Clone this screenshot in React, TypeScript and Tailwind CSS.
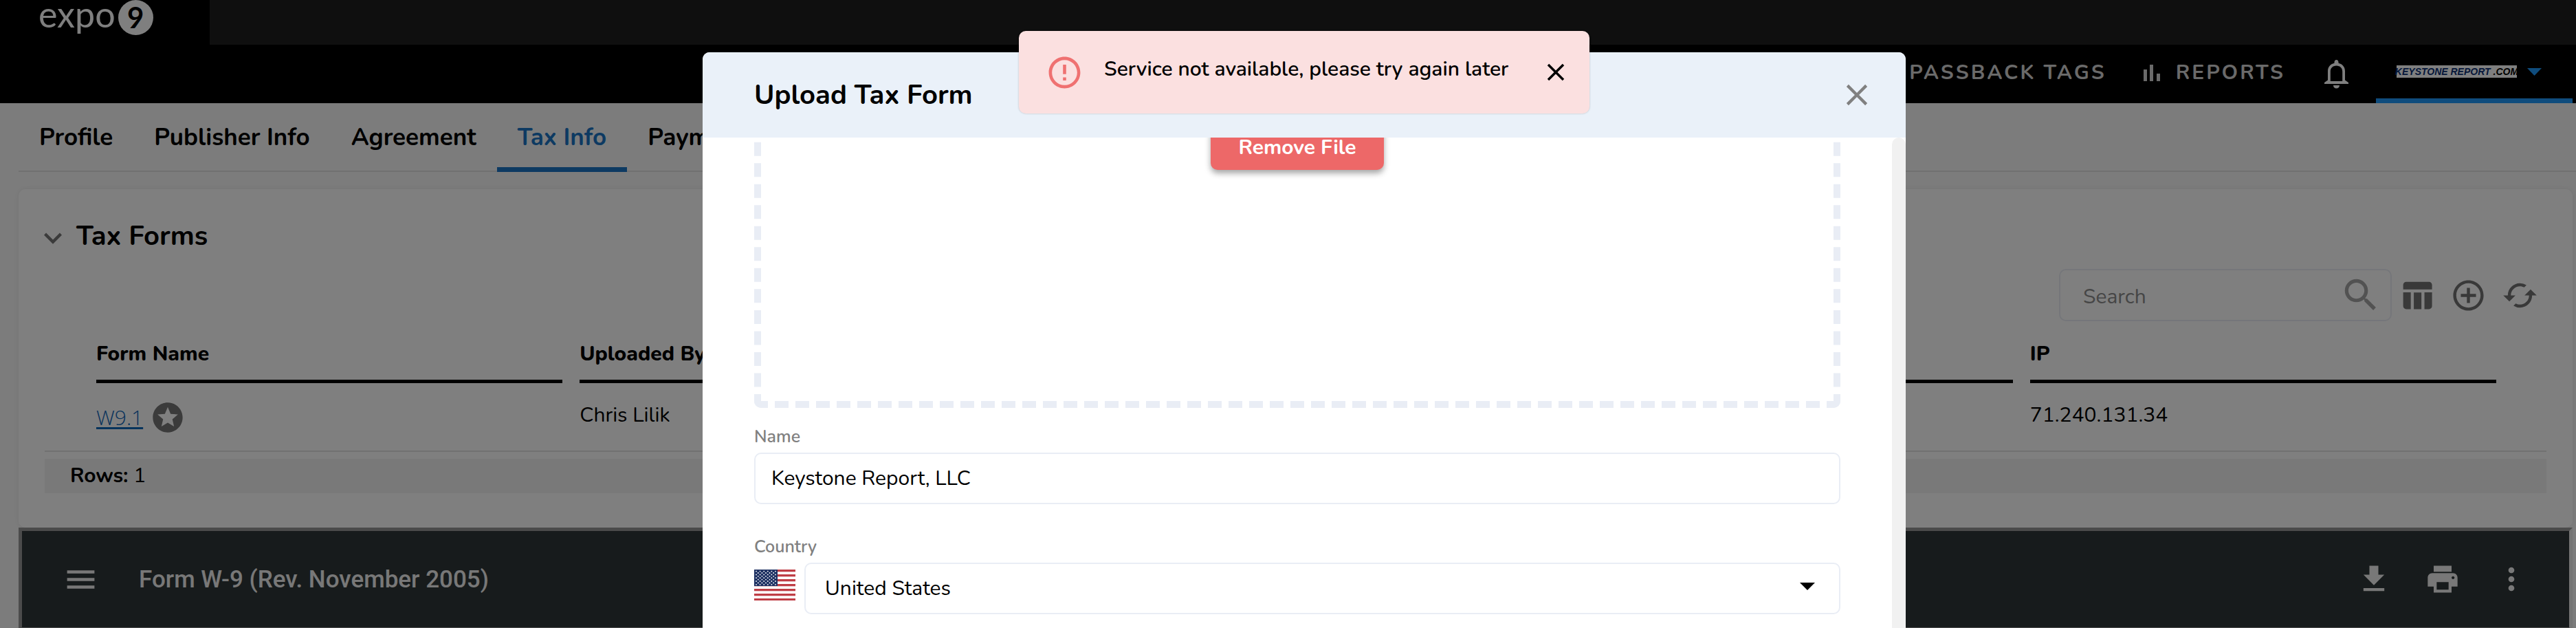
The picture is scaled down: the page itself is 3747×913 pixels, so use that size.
import React from "react";
import {
  MdAddCircleOutline,
  MdCached,
  MdClose,
  MdDownload,
  MdErrorOutline,
  MdExpandMore,
  MdMenu,
  MdMoreVert,
  MdPrint,
  MdSearch,
  MdStars,
  MdTableChart,
} from "react-icons/md";

const tabs = ["Profile", "Publisher Info", "Agreement", "Tax Info", "Payments"];

function BarsIcon() {
  return (
    <svg width="25" height="24" viewBox="0 0 25 24" fill="currentColor" aria-hidden="true">
      <rect x="0" y="7" width="5" height="17" />
      <rect x="9" y="0" width="5" height="24" />
      <rect x="19" y="13" width="5" height="11" />
    </svg>
  );
}

function BellIcon() {
  return (
    <svg width="35" height="42" viewBox="0 0 35 42" fill="currentColor" aria-hidden="true">
      <path
        fillRule="evenodd"
        d="M17.500 0C15.700 0 14.500 1.500 14.500 3.600V4.800C8.500 6.200 5 10.600 5 16.500V29.500L0 33V35H35V33L30 29.500V16.500C30 10.600 26.500 6.200 20.500 4.800V3.600C20.500 1.500 19.300 0 17.500 0ZM17.500 8.500C22.800 8.500 26.200 12 26.200 17V31H8.800V17C8.800 12 12.200 8.500 17.500 8.500Z"
      />
      <path d="M13 37H22C22 39.800 20.200 41.500 17.500 41.500S13 39.800 13 37Z" />
    </svg>
  );
}

function FlagIcon() {
  const stars = [];
  for (let row = 0; row < 9; row++) {
    for (let col = 0; col < (row % 2 ? 5 : 6); col++) {
      stars.push(
        <circle key={`${row}-${col}`} cx={3 + col * 5.6 + (row % 2 ? 2.8 : 0)} cy={2.6 + row * 2.4} r="0.9" fill="#fff" />
      );
    }
  }
  return (
    <svg className="shrink-0" width="60" height="45" viewBox="0 0 60 45" role="img" aria-label="US flag">
      <rect width="60" height="45" fill="#fff" />
      {[0, 7, 14, 21, 28, 35, 42].map((y) => (
        <rect key={y} y={y} width="60" height="3" fill="#bf3e46" />
      ))}
      {[3, 10, 17, 24, 31, 38].map((y) => (
        <rect key={y} y={y} width="60" height="1" fill="#ecc9cd" />
      ))}
      <rect width="34" height="24" fill="#1f3263" />
      {stars}
    </svg>
  );
}

function Header() {
  return (
    <header className="bg-black text-white">
      <div className="flex h-[65px]">
        <a href="#" className="flex w-[305px] items-start pl-14 font-[Lato,sans-serif]">
          <span className="text-[52px] leading-[40px]">expo</span>
          <span className="ml-1 flex h-[51px] w-[51px] items-center justify-center rounded-full bg-white text-[42px] leading-[51px] font-bold text-black">
            9
          </span>
        </a>
        <div className="flex-1 bg-[#1e1e1e]" />
      </div>
      <nav className="flex h-[85px] items-center justify-end pr-[5px] text-[30px] font-bold tracking-[3px] text-[#d4d4d4]">
        <a href="#" className="pb-1">
          PASSBACK TAGS
        </a>
        <a href="#" className="ml-[54px] flex items-center gap-[22px] pb-1">
          <BarsIcon />
          REPORTS
        </a>
        <button type="button" aria-label="Notifications" className="ml-[57px] text-white">
          <BellIcon />
        </button>
        <button
          type="button"
          className="ml-10 flex h-full w-[286px] items-center border-b-[7px] border-[#1e98fb] pl-[30px] tracking-normal"
        >
          <span className="flex h-[18px] w-[175px] items-center justify-center gap-1 bg-white font-['Liberation_Sans_Narrow','Liberation_Sans',sans-serif] text-[14px] leading-[18px] font-bold whitespace-nowrap text-[#0a2f73] italic">
            KEYSTONE REPORT <span className="text-black">.COM</span>
          </span>
          <svg className="ml-[15px]" width="21" height="11" viewBox="0 0 21 11" aria-hidden="true">
            <path d="M0 0H21L10.500 11Z" fill="#1e98fb" />
          </svg>
        </button>
      </nav>
    </header>
  );
}

function Tabs() {
  return (
    <div className="ml-[27px] flex h-[100px] border-b-2 border-[#e2e2e2] text-[35px] font-bold">
      {tabs.map((tab) => (
        <a
          key={tab}
          href="#"
          className={
            tab === "Tax Info"
              ? "-mb-0.5 flex items-center border-b-[7px] border-[#1b75c4] px-[30px] pt-2 text-[#1b75c4]"
              : "flex items-center px-[30px] pt-0.5"
          }
        >
          {tab}
        </a>
      ))}
    </div>
  );
}

function TaxForms() {
  return (
    <section className="mt-[25px] mr-[5px] ml-[27px] rounded-[10px] bg-white px-[38px] pt-[38px] pb-[50px] shadow-[0_0_8px_rgba(0,0,0,0.08)]">
      <button type="button" className="-ml-3.5 flex items-center text-[40px] leading-[60px] font-bold">
        <MdExpandMore size={52} className="mt-1.5 text-[#777]" />
        <span className="ml-2">Tax Forms</span>
      </button>

      {/* Toolbar */}
      <div className="mt-[18px] flex items-center justify-end gap-[22px] pr-3 text-[#737373]">
        <label className="-mr-3 flex h-[76px] w-[484px] items-center rounded-[10px] border-2 border-[#eaedf5] pr-3 pl-[33px] text-[30px]">
          <input
            type="search"
            aria-label="Search"
            placeholder="Search"
            className="w-0 flex-1 pt-1 outline-none placeholder:text-[#8c8c8c]"
          />
          <MdSearch size={62} className="text-[#a5a5a5]" />
        </label>
        <button type="button" aria-label="Columns">
          <MdTableChart size={53} />
        </button>
        <button type="button" aria-label="Add">
          <MdAddCircleOutline size={53} />
        </button>
        <button type="button" aria-label="Refresh">
          <MdCached size={53} />
        </button>
      </div>

      {/* Forms table */}
      <div className="border-b-2 border-[#e2e2e2] pr-12 pl-[75px]">
        <table className="w-full table-fixed text-left text-[30px] leading-10">
          <thead>
            <tr>
              {["Form Name", "Uploaded By", "", "", "IP"].map((name, i) => (
                <th key={i} className="p-0 pr-[25px] font-extrabold">
                  <div className="h-[90px] border-b-[5px] border-black pt-7">{name}</div>
                </th>
              ))}
            </tr>
          </thead>
          <tbody>
            <tr className="h-[98px]">
              <td className="p-0">
                <div className="flex items-center gap-2.5 pt-0.5">
                  <a
                    href="#"
                    className="font-['Open_Sans',sans-serif] font-light text-[#0f66b8] underline decoration-[3px] underline-offset-[3px]"
                  >
                    W9.1
                  </a>
                  <MdStars size={52} className="text-[#777]" />
                </div>
              </td>
              <td className="p-0 pb-1">Chris Lilik</td>
              <td />
              <td />
              <td className="p-0 pb-1">71.240.131.34</td>
            </tr>
          </tbody>
        </table>
      </div>
      <p className="mt-2.5 h-[50px] bg-[#f2f2f2] pl-[37px] text-[30px] leading-[50px]">
        <span className="font-bold">Rows:</span> 1
      </p>
    </section>
  );
}

function PdfViewer() {
  return (
    <section className="mr-[5px] ml-[27px] border-[5px] border-[#979797] border-r-[#e9e9e9] bg-[#2f3738]">
      <div className="flex h-[140px] items-center gap-12 pr-[58px] pl-[59px] text-[#f1f1f1]">
        <button type="button" aria-label="Menu">
          <MdMenu size={53} />
        </button>
        <h2 className="ml-2.5 flex-1 pt-0.5 font-[Roboto,sans-serif] text-[35px] font-medium">
          Form W-9 (Rev. November 2005)
        </h2>
        <button type="button" aria-label="Download">
          <MdDownload size={52} />
        </button>
        <button type="button" aria-label="Print">
          <MdPrint size={52} />
        </button>
        <button type="button" aria-label="More">
          <MdMoreVert size={52} />
        </button>
      </div>
    </section>
  );
}

function UploadModal() {
  return (
    <div
      role="dialog"
      aria-labelledby="modal-title"
      className="flex h-full w-[1750px] flex-col overflow-hidden rounded-t-[10px] bg-white"
    >
      <div className="flex h-[124px] shrink-0 items-center justify-between bg-[#eaf1f9] pr-[45px] pl-[75px]">
        <h1 id="modal-title" className="text-[40px] font-bold">
          Upload Tax Form
        </h1>
        <button type="button" aria-label="Close" className="text-[#808080]">
          <MdClose size={52} />
        </button>
      </div>

      <div className="flex min-h-0 flex-1">
        <form className="flex-1 overflow-hidden px-[75px]">
          {/* Drop zone, scrolled under the header */}
          <div className="-mt-[207px] mb-[27px] flex h-[600px] items-start justify-center rounded-[10px] border-[10px] border-dashed border-[#e9edf5] pt-[180px]">
            <button
              type="button"
              className="h-16 rounded-[10px] bg-[#ed6868] px-10 text-[30px] leading-[30px] font-bold text-white shadow-[0_5px_8px_rgba(0,0,0,0.35)]"
            >
              Remove File
            </button>
          </div>

          <label htmlFor="name" className="mb-2 block text-[25px] leading-[30px] font-semibold text-[#808080]">
            Name
          </label>
          <input
            id="name"
            type="text"
            defaultValue="Keystone Report, LLC"
            className="mb-[47px] block h-[75px] w-full rounded-[10px] border-2 border-[#e9edf5] px-[23px] text-[30px] outline-none"
          />

          <label htmlFor="country" className="mb-2 block text-[25px] leading-[30px] font-semibold text-[#808080]">
            Country
          </label>
          <div className="flex items-start gap-[13px]">
            <div className="pt-2.5">
              <FlagIcon />
            </div>
            <div className="relative flex-1">
              <select
                id="country"
                defaultValue="United States"
                className="h-[75px] w-full appearance-none rounded-[10px] border-2 border-[#e9edf5] bg-white px-7 text-[30px] outline-none"
              >
                <option>United States</option>
              </select>
              <svg
                className="pointer-events-none absolute top-[29px] right-[37px]"
                width="22"
                height="11"
                viewBox="0 0 22 11"
                aria-hidden="true"
              >
                <path d="M0 0H22L11 11Z" />
              </svg>
            </div>
          </div>
        </form>
        <div className="w-5 rounded-t-full bg-[#f1f1f1]" />
      </div>
    </div>
  );
}

function Toast() {
  return (
    <div
      role="alert"
      className="flex h-[120px] w-[830px] items-center rounded-[10px] bg-[#fbe0e0] pr-7 pl-[39px] shadow-[0_0_3px_rgba(0,0,0,0.2)]"
    >
      <MdErrorOutline size={55} className="shrink-0 text-[#ef7171]" />
      <p className="ml-[30px] flex-1 pb-2.5 text-[30px] font-semibold whitespace-nowrap">
        Service not available, please try again later
      </p>
      <button type="button" aria-label="Dismiss">
        <MdClose size={42} />
      </button>
    </div>
  );
}

export default function App() {
  return (
    <div className="relative h-screen overflow-hidden bg-[#f9f9f9] font-['Nunito','Open_Sans',sans-serif] text-black">
      <Header />
      <Tabs />
      <TaxForms />
      <PdfViewer />

      {/* Overlays */}
      <div className="absolute inset-0 flex justify-center bg-black/50 pt-[76px] pl-[47px]">
        <UploadModal />
      </div>
      <div className="absolute inset-x-0 top-[45px] flex justify-center pl-[47px]">
        <Toast />
      </div>
    </div>
  );
}
